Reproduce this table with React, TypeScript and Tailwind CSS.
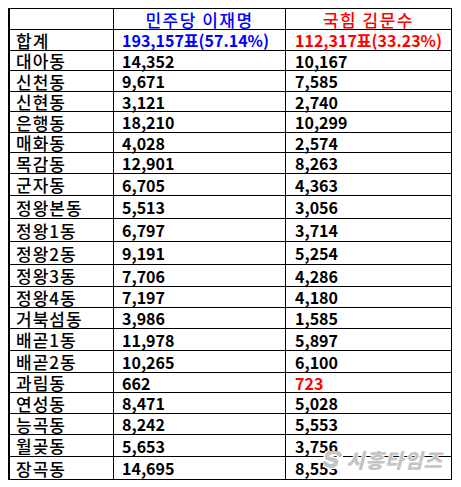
import React from "react";

type Row = { name: string; a: string; b: string; h: string; bRed?: boolean };

const rows: Row[] = [
  { name: "대아동", a: "14,352", b: "10,167", h: "h-[20px]" },
  { name: "신천동", a: "9,671", b: "7,585", h: "h-[21px]" },
  { name: "신현동", a: "3,121", b: "2,740", h: "h-[20px]" },
  { name: "은행동", a: "18,210", b: "10,299", h: "h-[21px]" },
  { name: "매화동", a: "4,028", b: "2,574", h: "h-[20px]" },
  { name: "목감동", a: "12,901", b: "8,263", h: "h-[21px]" },
  { name: "군자동", a: "6,705", b: "4,363", h: "h-[22px]" },
  { name: "정왕본동", a: "5,513", b: "3,056", h: "h-[23px]" },
  { name: "정왕1동", a: "6,797", b: "3,714", h: "h-[23px]" },
  { name: "정왕2동", a: "9,191", b: "5,254", h: "h-[23px]" },
  { name: "정왕3동", a: "7,706", b: "4,286", h: "h-[22px]" },
  { name: "정왕4동", a: "7,197", b: "4,180", h: "h-[21px]" },
  { name: "거북섬동", a: "3,986", b: "1,585", h: "h-[21px]" },
  { name: "배곧1동", a: "11,978", b: "5,897", h: "h-[22px]" },
  { name: "배곧2동", a: "10,265", b: "6,100", h: "h-[22px]" },
  { name: "과림동", a: "662", b: "723", h: "h-[20px]", bRed: true },
  { name: "연성동", a: "8,471", b: "5,028", h: "h-[21px]" },
  { name: "능곡동", a: "8,242", b: "5,553", h: "h-[21px]" },
  { name: "월곶동", a: "5,653", b: "3,756", h: "h-[22px]" },
  { name: "장곡동", a: "14,695", b: "8,553", h: "h-[22px]" },
];

const font = { fontFamily: '"Noto Sans CJK KR", "Noto Sans", sans-serif' };

export default function App() {
  return (
    <div className="w-[461px] h-[487px] bg-white p-2" style={font}>
      <div className="relative w-[444px] border border-l-2 border-black">
        {/* header */}
        <div className="flex h-[21px] border-b border-black">
          <div className="w-[104px] border-r border-black" />
          <div className="w-[172px] border-r border-black flex items-center justify-center text-[17px] font-medium leading-none text-[#0000ff] tracking-[1.5px]">
            민주당 이재명
          </div>
          <div className="flex-1 flex items-center justify-center text-[17px] font-medium leading-none text-[#ff0000] tracking-[1.5px]">
            국힘 김문수
          </div>
        </div>
        {/* total */}
        <div className="flex h-[21px] border-b border-black">
          <div className="w-[104px] border-r border-black flex items-center pl-[6px] text-[17px] font-medium leading-none text-black tracking-[1px]">
            합계
          </div>
          <div className="w-[172px] border-r border-black flex items-center pl-[8px] text-[16px] font-bold leading-none text-[#0000ff]">
            193,157표(57.14%)
          </div>
          <div className="flex-1 flex items-center pl-[9px] text-[16px] font-bold leading-none text-[#ff0000]">
            112,317표(33.23%)
          </div>
        </div>
        {rows.map((r, i) => (
          <div
            key={r.name}
            className={`flex ${r.h} ${i < rows.length - 1 ? "border-b border-black" : ""}`}
          >
            <div className="w-[104px] border-r border-black flex items-center pl-[6px] text-[17px] font-medium leading-none text-black whitespace-nowrap tracking-[1px]">
              {r.name}
            </div>
            <div className="w-[172px] border-r border-black flex items-center pl-[8px] text-[16px] font-bold leading-none text-black">
              {r.a}
            </div>
            <div
              className={`flex-1 flex items-center pl-[9px] text-[16px] font-bold leading-none ${
                r.bRed ? "text-[#ff0000]" : "text-black"
              }`}
            >
              {r.b}
            </div>
          </div>
        ))}
        {/* watermark */}
        <div className="absolute left-[313px] top-[441px] flex items-center gap-[3px] pointer-events-none">
          <svg width="20" height="18" viewBox="0 0 20 18">
            <path
              d="M17 4 C14 0 5 0 4 5 C3 10 15 7 13 12 C11 17 4 15 2 12"
              fill="none"
              stroke="#ffffff"
              strokeWidth="7"
              strokeLinecap="round"
            />
            <path
              d="M17 4 C14 0 5 0 4 5 C3 10 15 7 13 12 C11 17 4 15 2 12"
              fill="none"
              stroke="#c4c4c4"
              strokeWidth="4"
              strokeLinecap="round"
            />
          </svg>
          <span
            className="text-[20px] font-black italic leading-none text-[#c4c4c4] tracking-[1px]"
            style={{ WebkitTextStroke: "1.5px #ffffff", paintOrder: "stroke fill" }}
          >
            시흥타임즈
          </span>
        </div>
      </div>
    </div>
  );
}
